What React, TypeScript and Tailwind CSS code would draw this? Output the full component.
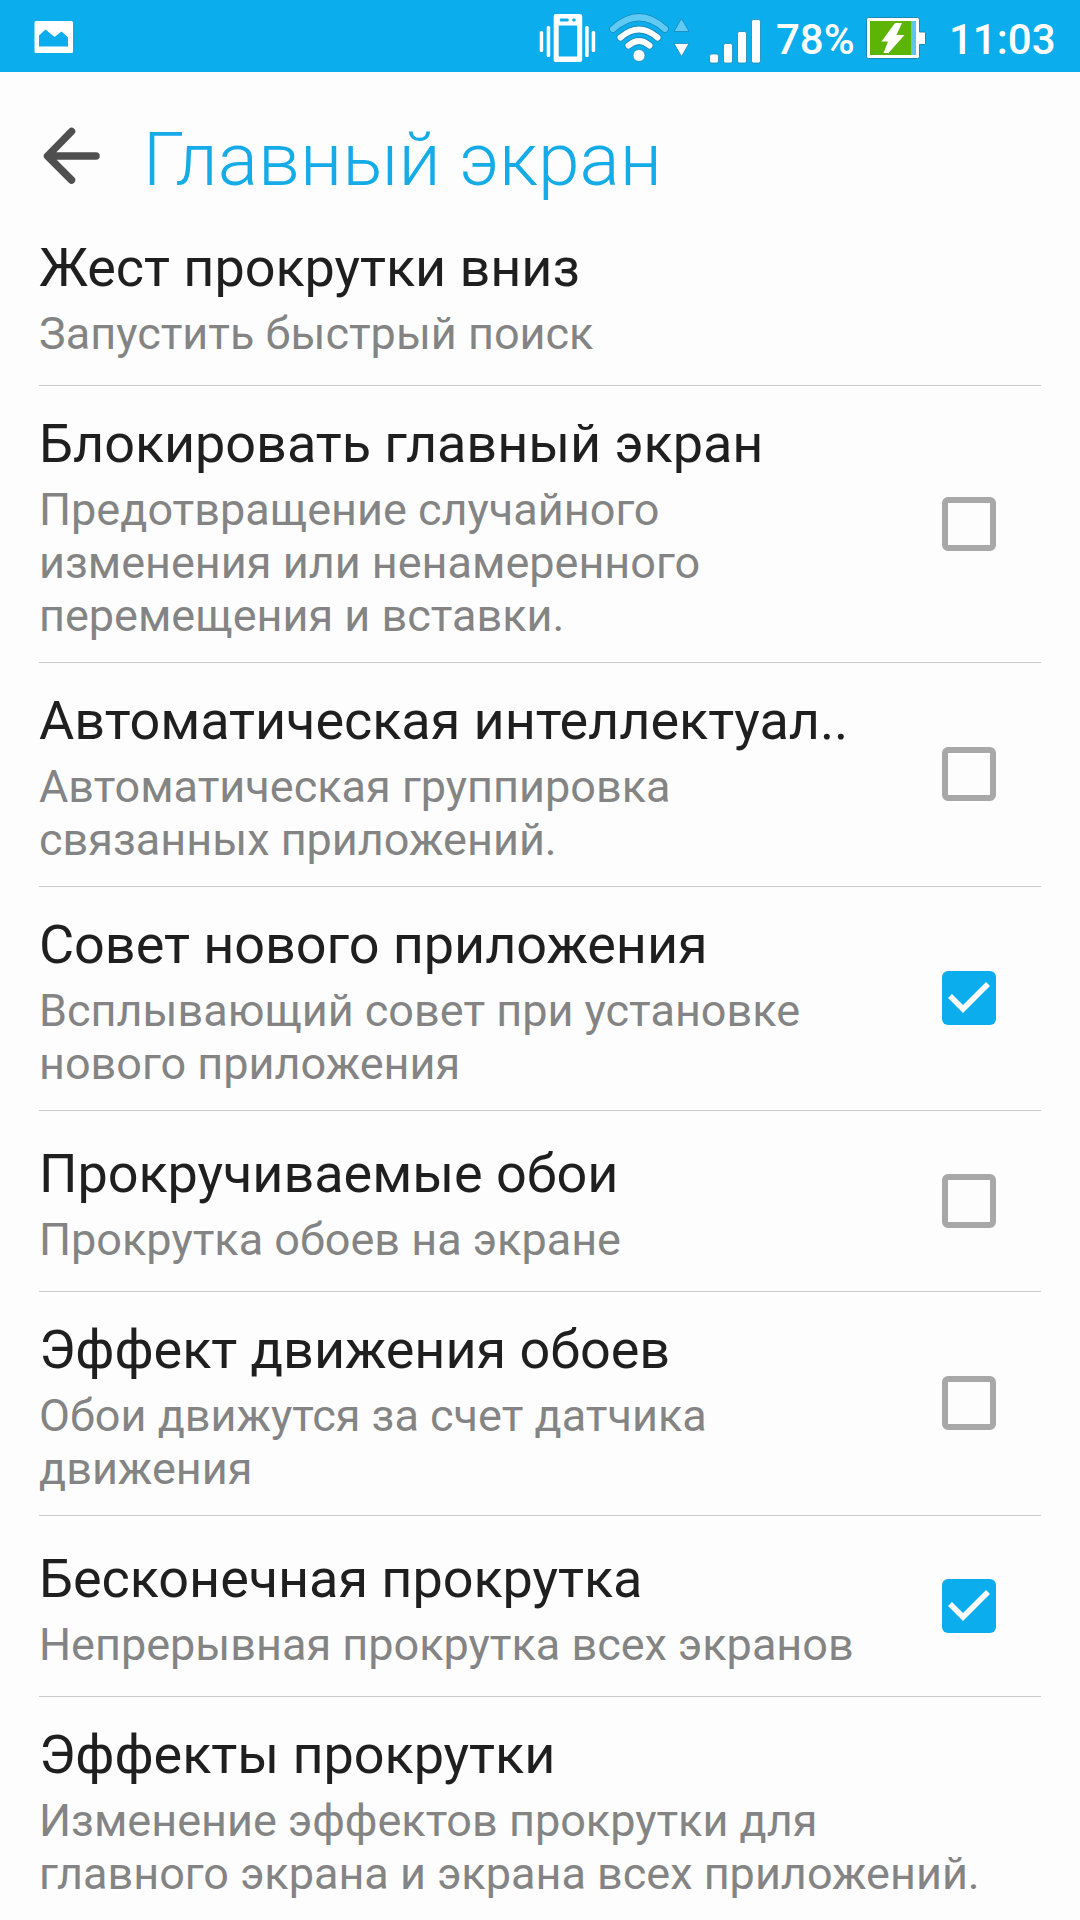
import React from "react";

type Item = { title: string; lines: string[]; checked?: boolean };

const items: Item[] = [
  { title: "Жест прокрутки вниз", lines: ["Запустить быстрый поиск"] },
  {
    title: "Блокировать главный экран",
    lines: ["Предотвращение случайного", "изменения или ненамеренного", "перемещения и вставки."],
    checked: false,
  },
  {
    title: "Автоматическая интеллектуал..",
    lines: ["Автоматическая группировка", "связанных приложений."],
    checked: false,
  },
  {
    title: "Совет нового приложения",
    lines: ["Всплывающий совет при установке", "нового приложения"],
    checked: true,
  },
  { title: "Прокручиваемые обои", lines: ["Прокрутка обоев на экране"], checked: false },
  {
    title: "Эффект движения обоев",
    lines: ["Обои движутся за счет датчика", "движения"],
    checked: false,
  },
  { title: "Бесконечная прокрутка", lines: ["Непрерывная прокрутка всех экранов"], checked: true },
  {
    title: "Эффекты прокрутки",
    lines: ["Изменение эффектов прокрутки для", "главного экрана и экрана всех приложений."],
  },
];

function PictureIcon() {
  return (
    <svg width="40" height="32" viewBox="0 0 40 32" className="shrink-0">
      <rect x="0.5" y="0" width="38.5" height="32" rx="1.5" fill="#fff" />
      <path d="M5 14.5 11.5 8.5 20.5 16 27.5 10.5 34 16.5V25.5H5Z" fill="#0cadec" />
    </svg>
  );
}

function VibrateIcon() {
  return (
    <svg width="57" height="48" viewBox="-0.7 0 57 48" className="shrink-0">
      <g fill="#fff">
        <rect x="0" y="17" width="3.5" height="21" rx="1.5" />
        <rect x="7" y="12" width="3.5" height="31" rx="1.5" />
        <rect x="45.5" y="12" width="3.5" height="31" rx="1.5" />
        <rect x="52" y="17" width="3.5" height="21" rx="1.5" />
        <path
          fillRule="evenodd"
          d="M16 0H40Q42.500 0 42.500 2V46Q42.500 48 40 48H16Q14 48 14 46V2Q14 0 16 0ZM19 11.500V42.500H37.500V11.500ZM21 4.500Q20 4.500 20 6T21 7.500H28Q29 7.500 29 6T28 4.500ZM33.500 4.500Q32.500 4.500 32.500 6T33.500 7.500H35Q36 7.500 36 6T35 4.500Z"
        />
      </g>
    </svg>
  );
}

function WifiIcon() {
  return (
    <svg width="82" height="54" viewBox="608 11 82 54" className="shrink-0">
      <g fill="none" strokeLinecap="round">
        <path d="M613 29Q639 5.500 665 29" stroke="#1689b8" strokeWidth="7.500" />
        <path d="M613 29Q639 5.500 665 29" stroke="#5fcaf3" strokeWidth="6" />
        <path d="M620.500 37.500Q639 21.500 657.500 37.500" stroke="#1689b8" strokeWidth="7.500" />
        <path d="M620.500 37.500Q639 21.500 657.500 37.500" stroke="#fff" strokeWidth="6" />
        <path d="M628.500 45.500Q639 36.500 649.500 45.500" stroke="#1689b8" strokeWidth="7.500" />
        <path d="M628.500 45.500Q639 36.500 649.500 45.500" stroke="#fff" strokeWidth="6" />
      </g>
      <circle cx="639" cy="55.500" r="6" fill="#fff" stroke="#1689b8" strokeWidth="0.700" />
      <path d="M681.500 18.500 689 31.500H674Z" fill="#5fcaf3" stroke="#1689b8" strokeWidth="0.800" strokeLinejoin="round" />
      <path d="M681.500 56.500 674 43.500H689Z" fill="#fff" stroke="#1689b8" strokeWidth="0.800" strokeLinejoin="round" />
    </svg>
  );
}

function SignalIcon() {
  return (
    <svg width="52" height="46" viewBox="709 18 52 46" className="shrink-0">
      <g fill="#fff" stroke="#1689b8" strokeWidth="0.800">
        <rect x="709.5" y="54" width="9" height="9" rx="2" />
        <rect x="723.5" y="43.500" width="9" height="19.500" rx="2" />
        <rect x="737.5" y="31.500" width="9" height="31.500" rx="2" />
        <rect x="751.5" y="19.500" width="9" height="43.500" rx="2" />
      </g>
    </svg>
  );
}

function BatteryIcon() {
  return (
    <svg width="60" height="42" viewBox="866 17 60 42" className="shrink-0">
      <path
        d="M868.500 17.500H917.500Q919.500 17.500 919.500 19.500V32H924.500Q925.500 32 925.500 33V43.500Q925.500 44.500 924.500 44.500H919.500V56.500Q919.500 58.500 917.500 58.500H868.500Q866.500 58.500 866.500 56.500V19.500Q866.500 17.500 868.500 17.500Z"
        fill="#fff"
        stroke="#1689b8"
        strokeWidth="1"
      />
      <rect x="870" y="21" width="41" height="34" fill="#5cb404" />
      <rect x="911" y="21" width="5" height="34" fill="#5fc4ec" />
      <path d="M895 23H902L896.500 35H904.500L888.500 53H883.500L888 41.500H881.500Z" fill="#fff" />
    </svg>
  );
}

function StatusBar() {
  return (
    <header className="flex h-[72px] items-start bg-[#0cadec] pl-[34px] font-medium text-white">
      <div className="mt-[21px] w-[505px]">
        <PictureIcon />
      </div>
      <div className="mt-[13.5px] w-[69px]">
        <VibrateIcon />
      </div>
      <div className="mt-[11px] w-[101px]">
        <WifiIcon />
      </div>
      <div className="mt-[18px] w-[67px]">
        <SignalIcon />
      </div>
      <span className="mt-[12px] w-[90px] text-[42px] leading-[56px] whitespace-nowrap">78%</span>
      <div className="mt-[17px] w-[83px]">
        <BatteryIcon />
      </div>
      <span className="mt-[12px] text-[42px] leading-[56px] whitespace-nowrap">11:03</span>
    </header>
  );
}

function Checkbox({ checked }: { checked: boolean }) {
  if (!checked) {
    return <div className="mr-[45px] mb-[0.5px] size-[54px] shrink-0 rounded-[6px] border-6 border-[#a8a8a8]" />;
  }
  return (
    <div className="mr-[45px] mb-[0.5px] size-[54px] shrink-0 rounded-[6px] bg-[#0cadec]">
      <svg width="54" height="54" viewBox="0 0 54 54">
        <path d="M8 25 21 38 46 13" fill="none" stroke="#fff" strokeWidth="5.5" />
      </svg>
    </div>
  );
}

function Row({ item, last }: { item: Item; last: boolean }) {
  return (
    <section
      className={
        "flex min-h-[181px] shrink-0 items-center justify-between " + (last ? "" : "border-b border-[#c9c9c9]")
      }
    >
      <div className="pt-[22px] pb-[20px] whitespace-nowrap">
        <h2 className="mb-[4px] text-[54px] leading-[71px] tracking-[-0.06px] text-[#1f1f1f]">{item.title}</h2>
        <p className="text-[45px] leading-[53px] text-[#848484]">
          {item.lines.map((line) => (
            <span key={line} className="block">
              {line}
            </span>
          ))}
        </p>
      </div>
      {item.checked !== undefined && <Checkbox checked={item.checked} />}
    </section>
  );
}

export default function App() {
  return (
    <div className="flex h-[1920px] w-[1080px] flex-col overflow-hidden bg-[#fdfdfd] font-['Roboto',sans-serif]">
      <StatusBar />
      <div className="flex h-[133px] shrink-0 items-start pl-[43px]">
        <svg width="57" height="58" viewBox="43 127 57 58" className="mt-[55px] shrink-0">
          <path
            d="M71.500 131.500 47.500 156 71.500 180M48 156H96"
            fill="none"
            stroke="#4f4f4f"
            strokeWidth="7.500"
            strokeLinecap="round"
            strokeLinejoin="round"
          />
        </svg>
        <h1 className="mt-[42px] ml-[43px] text-[75px] leading-[90px] font-light whitespace-nowrap text-[#14abe7]">
          Главный экран
        </h1>
      </div>
      <main className="flex flex-col px-[39px]">
        {items.map((item, i) => (
          <Row key={item.title} item={item} last={i === items.length - 1} />
        ))}
      </main>
    </div>
  );
}
